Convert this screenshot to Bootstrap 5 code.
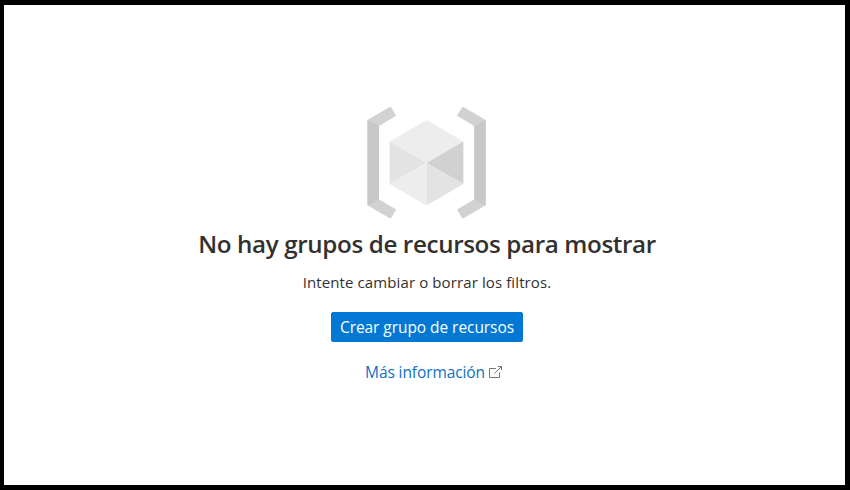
<!DOCTYPE html>
<html lang="es">
<head>
<meta charset="utf-8">
<meta name="viewport" content="width=device-width, initial-scale=1">
<title>Grupos de recursos</title>
<link href="https://cdn.jsdelivr.net/npm/bootstrap@5.3.0/dist/css/bootstrap.min.css" rel="stylesheet">
<style>
  body { font-family: "Open Sans", "Noto Sans", sans-serif; color: #323130; }
  .empty-frame { border: 5px solid #000; border-left-width: 4px; padding: 102px 0 0 5px; }
  .empty-art { width: 119px; height: 112px; margin-right: 2px; }
  .empty-title { font-size: 24.2px; line-height: 34px; font-weight: 560; letter-spacing: -.37px; margin-top: 8px; }
  .empty-text { font-size: 15px; line-height: 20px; letter-spacing: .11px; margin-top: 11px; }
  .btn-create { --bs-btn-bg: #0078d4; --bs-btn-border-color: #0078d4; width: 192px; height: 30px; font-size: 15.5px; line-height: 27px; letter-spacing: -.06px; border-radius: 2px; margin-top: 20px; }
  .more-link { color: #1070c4; font-size: 15.5px; line-height: 20px; letter-spacing: -.1px; margin: 20px 0 0 14px; gap: 4px; }
</style>
</head>
<body>
<main class="empty-frame vh-100 bg-white d-flex flex-column align-items-center text-nowrap overflow-hidden">
  <svg class="empty-art flex-shrink-0" viewBox="367 107 119 112" aria-hidden="true">
    <g id="bracket">
      <path fill="#d2d2d2" d="M367.5 120 389.7 107.1q1-.6 1.6.4l4.9 8.2-17.3 10.3v73.2l17.3 10.3-4.9 8.3q-.6 1-1.6.4L367.5 205.2Z"/>
      <path fill="#c8c8c8" d="M367.5 120 379 126v73.2l-11.5 6Z"/>
    </g>
    <use href="#bracket" transform="matrix(-1 0 0 1 853.2 0)"/>
    <path fill="#ededed" d="M426.5 120 463.4 141.5 426.5 163 389.6 141.5Z"/>
    <path fill="#e3e3e3" d="M389.6 141.5 426.5 163 389.6 184Z"/>
    <path fill="#d1d1d1" d="M463.4 141.5v42.5L426.5 163Z"/>
    <path fill="#ededed" d="M389.6 184 426.5 163v42.5Z"/>
    <path fill="#e3e3e3" d="M463.4 184 426.5 163v42.5Z"/>
  </svg>
  <h1 class="empty-title mb-0">No hay grupos de recursos para mostrar</h1>
  <p class="empty-text mb-0">Intente cambiar o borrar los filtros.</p>
  <button type="button" class="btn btn-primary btn-create p-0">Crear grupo de recursos</button>
  <a href="#" class="more-link d-flex align-items-center text-decoration-none"><span>Más información</span>
    <svg width="14" height="14" viewBox="0 0 14 14" fill="none" stroke="#777" aria-hidden="true"><path d="M7 3.5H.5v9h10V7.5M9 1.5h3.5V5M12.5 1.5 5.5 8.5"/></svg>
  </a>
</main>
<script src="https://cdn.jsdelivr.net/npm/bootstrap@5.3.0/dist/js/bootstrap.bundle.min.js"></script>
</body>
</html>
